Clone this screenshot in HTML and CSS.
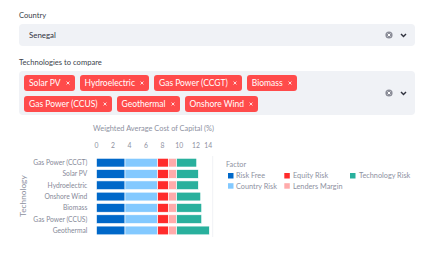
FILE: index.html
```html
<!DOCTYPE html>
<html>
<head>
<meta charset="utf-8">
<link rel="stylesheet" href="styles.css">
</head>
<body>
<div class="page">
  <div class="field">
    <div class="label">Country</div>
    <div class="select single">
      <span class="value">Senegal</span>
      <span class="icons">
        <svg class="clear" width="8" height="8" viewBox="0 0 8 8"><circle cx="4" cy="4" r="3.6" fill="#8b8d98"/><path d="M2.6 2.6 L5.4 5.4 M5.4 2.6 L2.6 5.4" stroke="#fff" stroke-width="1"/></svg>
        <svg class="chev" width="7" height="5" viewBox="0 0 7 5"><path d="M1 1 L3.5 3.6 L6 1" fill="none" stroke="#31333f" stroke-width="1.4"/></svg>
      </span>
    </div>
  </div>
  <div class="field">
    <div class="label">Technologies to compare</div>
    <div class="select multi">
      <div class="tags">
        <div class="row">
          <span class="tag">Solar PV<svg width="5" height="5" viewBox="0 0 5 5"><path d="M0.7 0.7 L4.3 4.3 M4.3 0.7 L0.7 4.3" stroke="#fff" stroke-width="1"/></svg></span>
          <span class="tag">Hydroelectric<svg width="5" height="5" viewBox="0 0 5 5"><path d="M0.7 0.7 L4.3 4.3 M4.3 0.7 L0.7 4.3" stroke="#fff" stroke-width="1"/></svg></span>
          <span class="tag">Gas Power (CCGT)<svg width="5" height="5" viewBox="0 0 5 5"><path d="M0.7 0.7 L4.3 4.3 M4.3 0.7 L0.7 4.3" stroke="#fff" stroke-width="1"/></svg></span>
          <span class="tag">Biomass<svg width="5" height="5" viewBox="0 0 5 5"><path d="M0.7 0.7 L4.3 4.3 M4.3 0.7 L0.7 4.3" stroke="#fff" stroke-width="1"/></svg></span>
        </div>
        <div class="row">
          <span class="tag">Gas Power (CCUS)<svg width="5" height="5" viewBox="0 0 5 5"><path d="M0.7 0.7 L4.3 4.3 M4.3 0.7 L0.7 4.3" stroke="#fff" stroke-width="1"/></svg></span>
          <span class="tag">Geothermal<svg width="5" height="5" viewBox="0 0 5 5"><path d="M0.7 0.7 L4.3 4.3 M4.3 0.7 L0.7 4.3" stroke="#fff" stroke-width="1"/></svg></span>
          <span class="tag">Onshore Wind<svg width="5" height="5" viewBox="0 0 5 5"><path d="M0.7 0.7 L4.3 4.3 M4.3 0.7 L0.7 4.3" stroke="#fff" stroke-width="1"/></svg></span>
        </div>
      </div>
      <span class="icons">
        <svg class="clear" width="8" height="8" viewBox="0 0 8 8"><circle cx="4" cy="4" r="3.6" fill="#8b8d98"/><path d="M2.6 2.6 L5.4 5.4 M5.4 2.6 L2.6 5.4" stroke="#fff" stroke-width="1"/></svg>
        <svg class="chev" width="7" height="5" viewBox="0 0 7 5"><path d="M1 1 L3.5 3.6 L6 1" fill="none" stroke="#31333f" stroke-width="1.4"/></svg>
      </span>
    </div>
  </div>
</div>
<svg class="chart" width="443" height="139" viewBox="0 115 443 139">
  <text class="title" x="153.5" y="130.7" text-anchor="middle">Weighted Average Cost of Capital (%)</text>
  <g class="ticks" text-anchor="middle">
    <text x="96.5" y="147.6">0</text>
    <text x="113.1" y="147.6">2</text>
    <text x="129.6" y="147.6">4</text>
    <text x="146.1" y="147.6">6</text>
    <text x="162.4" y="147.6">8</text>
    <text x="179.2" y="147.6">10</text>
    <text x="196" y="147.6">12</text>
    <text x="208.3" y="147.6">14</text>
  </g>
  <line x1="212.7" y1="156" x2="212.7" y2="237" stroke="#eceef2" stroke-width="0.8"/>
  <g class="bars" stroke="#fff" stroke-width="0.6">
    <g transform="translate(0,158.3)">
      <rect x="96.5" y="0" width="28.5" height="8.7" fill="#0068c9"/><rect x="125" y="0" width="32.7" height="8.7" fill="#83c9ff"/><rect x="157.7" y="0" width="10.6" height="8.7" fill="#ff2b2b"/><rect x="168.3" y="0" width="8.4" height="8.7" fill="#ffabab"/><rect x="176.7" y="0" width="20" height="8.7" fill="#29b09d"/>
    </g>
    <g transform="translate(0,169.6)">
      <rect x="96.5" y="0" width="28.5" height="8.7" fill="#0068c9"/><rect x="125" y="0" width="32.7" height="8.7" fill="#83c9ff"/><rect x="157.7" y="0" width="10.6" height="8.7" fill="#ff2b2b"/><rect x="168.3" y="0" width="8.4" height="8.7" fill="#ffabab"/><rect x="176.7" y="0" width="21.6" height="8.7" fill="#29b09d"/>
    </g>
    <g transform="translate(0,180.9)">
      <rect x="96.5" y="0" width="28.5" height="8.7" fill="#0068c9"/><rect x="125" y="0" width="32.7" height="8.7" fill="#83c9ff"/><rect x="157.7" y="0" width="10.6" height="8.7" fill="#ff2b2b"/><rect x="168.3" y="0" width="8.4" height="8.7" fill="#ffabab"/><rect x="176.7" y="0" width="21.6" height="8.7" fill="#29b09d"/>
    </g>
    <g transform="translate(0,192.2)">
      <rect x="96.5" y="0" width="28.5" height="8.7" fill="#0068c9"/><rect x="125" y="0" width="32.7" height="8.7" fill="#83c9ff"/><rect x="157.7" y="0" width="10.6" height="8.7" fill="#ff2b2b"/><rect x="168.3" y="0" width="8.4" height="8.7" fill="#ffabab"/><rect x="176.7" y="0" width="24" height="8.7" fill="#29b09d"/>
    </g>
    <g transform="translate(0,203.5)">
      <rect x="96.5" y="0" width="28.5" height="8.7" fill="#0068c9"/><rect x="125" y="0" width="32.7" height="8.7" fill="#83c9ff"/><rect x="157.7" y="0" width="10.6" height="8.7" fill="#ff2b2b"/><rect x="168.3" y="0" width="8.4" height="8.7" fill="#ffabab"/><rect x="176.7" y="0" width="25" height="8.7" fill="#29b09d"/>
    </g>
    <g transform="translate(0,214.8)">
      <rect x="96.5" y="0" width="28.5" height="8.7" fill="#0068c9"/><rect x="125" y="0" width="32.7" height="8.7" fill="#83c9ff"/><rect x="157.7" y="0" width="10.6" height="8.7" fill="#ff2b2b"/><rect x="168.3" y="0" width="8.4" height="8.7" fill="#ffabab"/><rect x="176.7" y="0" width="25" height="8.7" fill="#29b09d"/>
    </g>
    <g transform="translate(0,226.1)">
      <rect x="96.5" y="0" width="28.5" height="8.7" fill="#0068c9"/><rect x="125" y="0" width="32.7" height="8.7" fill="#83c9ff"/><rect x="157.7" y="0" width="10.6" height="8.7" fill="#ff2b2b"/><rect x="168.3" y="0" width="8.4" height="8.7" fill="#ffabab"/><rect x="176.7" y="0" width="32.6" height="8.7" fill="#29b09d"/>
    </g>
  </g>
  <g class="ylabels" text-anchor="end">
    <text x="87.3" y="165.1">Gas Power (CCGT)</text>
    <text x="87.3" y="176.4">Solar PV</text>
    <text x="87.3" y="187.7">Hydroelectric</text>
    <text x="87.3" y="199">Onshore Wind</text>
    <text x="87.3" y="210.3">Biomass</text>
    <text x="87.3" y="221.6">Gas Power (CCUS)</text>
    <text x="87.3" y="232.9">Geothermal</text>
  </g>
  <text class="axis-title" x="0" y="0" text-anchor="middle" transform="translate(25.5,196) rotate(-90)">Technology</text>
  <g class="legend">
    <text class="legend-title" x="226" y="167.3">Factor</text>
    <rect x="228" y="173" width="5.5" height="5.5" fill="#0068c9"/>
    <text x="236" y="178.4">Risk Free</text>
    <rect x="284.3" y="173" width="5.5" height="5.5" fill="#ff2b2b"/>
    <text x="293" y="178.4">Equity Risk</text>
    <rect x="350" y="173" width="5.5" height="5.5" fill="#29b09d"/>
    <text x="359" y="178.4">Technology Risk</text>
    <rect x="228" y="183.2" width="5.5" height="5.5" fill="#83c9ff"/>
    <text x="236" y="188.6">Country Risk</text>
    <rect x="284.3" y="183.2" width="5.5" height="5.5" fill="#ffabab"/>
    <text x="293" y="188.6">Lenders Margin</text>
  </g>
</svg>
</body>
</html>
```

FILE: styles.css
```css
html, body {
  margin: 0;
  padding: 0;
  background: #ffffff;
}
body {
  font-family: "Lato", "Noto Sans", sans-serif;
  color: #31333f;
  width: 443px;
  height: 254px;
  overflow: hidden;
}
.page {
  padding: 7px 28px 0 19px;
}
.field {
  margin-bottom: 8px;
}
.field:last-child {
  margin-bottom: 0;
}
.label {
  font-size: 7.6px;
  line-height: 16px;
  height: 16px;
  margin-bottom: 1px;
  color: #3d3f4b;
}
.select {
  background: #f0f2f6;
  border-radius: 4px;
  display: flex;
  align-items: center;
  justify-content: space-between;
}
.single {
  height: 22px;
  padding-left: 10px;
}
.value {
  font-size: 7.9px;
  color: #31333f;
}
.icons {
  display: flex;
  align-items: center;
  gap: 7px;
  padding-right: 8px;
}
.icons svg {
  display: block;
}
.multi {
  height: 44px;
  padding-left: 5px;
  box-sizing: border-box;
}
.tags {
  display: flex;
  flex-direction: column;
  gap: 5px;
}
.row {
  display: flex;
  gap: 5px;
}
.tag {
  height: 16px;
  display: inline-flex;
  align-items: center;
  gap: 5px;
  padding: 0 5px;
  background: #ff4b4b;
  color: #ffffff;
  border-radius: 3px;
  font-size: 8.5px;
  white-space: nowrap;
}
.tag svg {
  display: block;
  width: 4px;
  height: 4px;
}
.chart {
  display: block;
  font-family: "Lato", "Noto Sans", sans-serif;
}
.title {
  font-size: 7.4px;
  fill: #8e919f;
}
.ticks text {
  font-size: 6.8px;
  fill: #8e919f;
}
.ylabels text {
  font-size: 6.7px;
  fill: #868998;
}
.axis-title {
  font-size: 8.3px;
  fill: #8e919f;
}
.legend text {
  font-size: 7.3px;
  fill: #8e919f;
}
```
